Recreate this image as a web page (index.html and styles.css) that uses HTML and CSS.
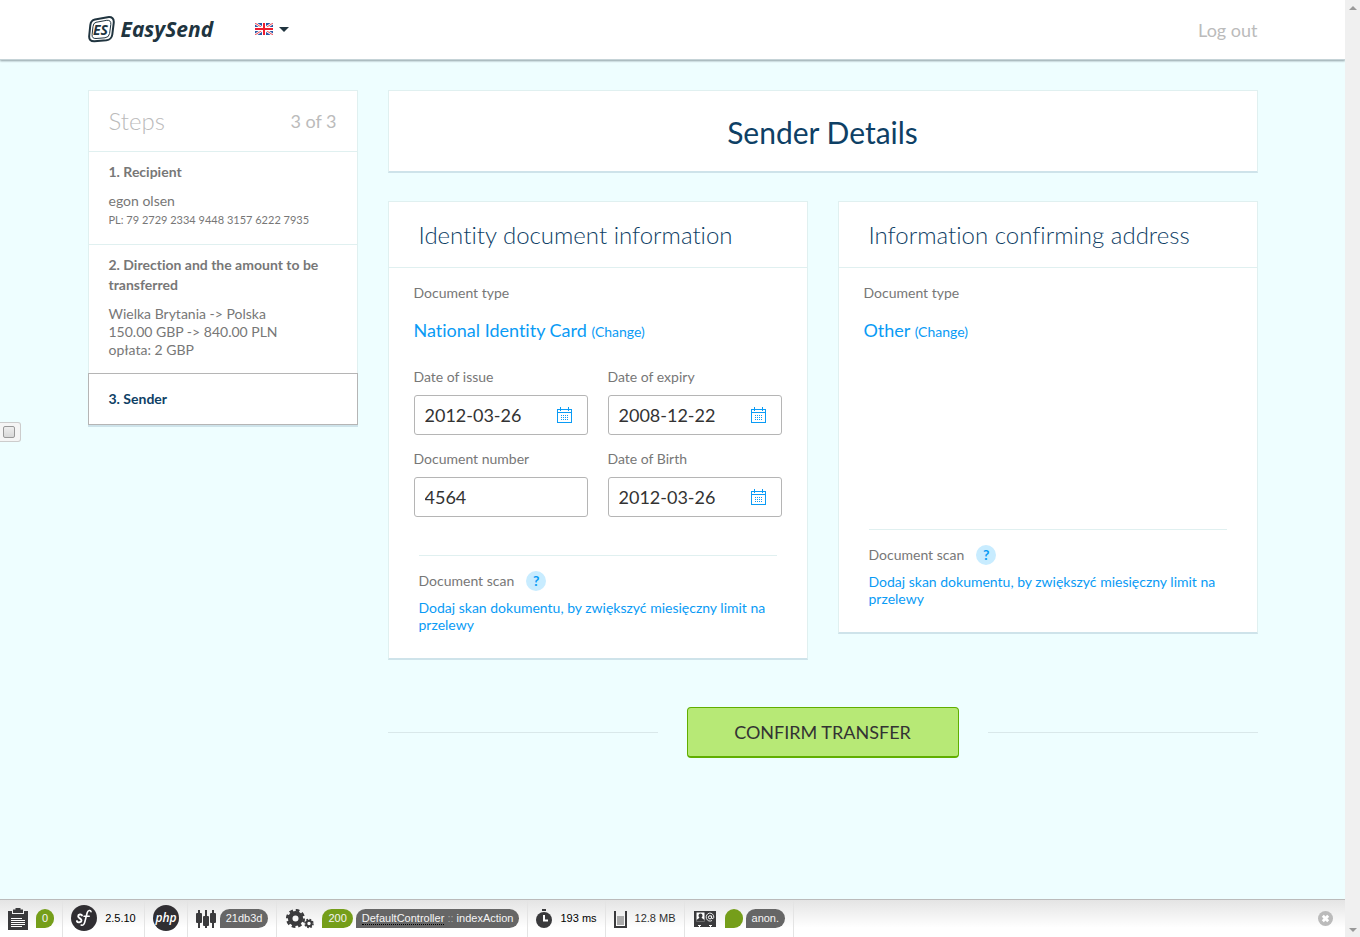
FILE: index.html
```
<!DOCTYPE html>
<html lang="en">
<head>
<meta charset="utf-8">
<title>EasySend - Sender Details</title>
<link rel="stylesheet" href="styles.css">
</head>
<body>
<svg class="sprites" aria-hidden="true">
  <symbol id="calendar" viewBox="0 0 15 16">
    <path d="M.5 2.5h14v13H.5zM.5 5.5h14M3.5 0v4M11.500 0v4" fill="none" stroke="#0a9bf5"/>
    <path d="M4 8.500h1m1 0h1m1 0h1m1 0h1M4 10.500h1m1 0h1m1 0h1m1 0h1M4 12.500h1m1 0h1m1 0h1m1 0h1" stroke="#0a9bf5"/>
  </symbol>
</svg>
<div class="page">
  <header class="topbar">
    <div class="container topbar-row">
      <a class="logo" href="#">
        <svg class="logo-mark" width="27" height="27" viewBox="0 0 27 27" aria-hidden="true">
          <path d="M7 3.600 19.500 1.200Q26.500.300 25.700 7.200L24.300 18.500Q23.600 23.600 18.300 24.300L6.500 25.300Q.700 25.500 1.200 20L2.300 9.200Q2.800 4.500 7 3.600Z" fill="none" stroke="#20343f" stroke-width="2"/>
          <path d="M8 6.300 18.800 4.300Q23.300 3.900 22.800 8.500L21.600 17.500Q21 21.400 17 21.800L8 22.500Q3.700 22.700 4.100 18.500L5 10.500Q5.300 6.900 8 6.300Z" fill="none" stroke="#20343f" stroke-width="1"/>
          <text class="logo-initials" x="5" y="19">ES</text>
        </svg>
        <span class="logo-name">EasySend</span>
      </a>
      <button class="lang" type="button" aria-label="Language: English">
        <svg width="18" height="12" viewBox="0 0 18 12" aria-hidden="true">
          <path d="M0 0h18v12H0z" fill="#2a57a5"/>
          <path d="M0 0 18 12M18 0 0 12" stroke="#fff" stroke-width="2.600"/>
          <path d="M0 0 18 12M18 0 0 12" stroke="#ef4350" stroke-width="1"/>
          <path d="M9 0v12M0 6h18" stroke="#fff" stroke-width="4"/>
          <path d="M9 0v12M0 6h18" stroke="#ee1c2e" stroke-width="2"/>
        </svg>
        <span class="caret"></span>
      </button>
      <a class="logout" href="#">Log out</a>
    </div>
  </header>

  <div class="container layout">
    <aside class="steps">
      <div class="steps-head"><h2>Steps</h2><span>3 of 3</span></div>
      <section class="step">
        <h3>1. Recipient</h3>
        <p>egon olsen</p>
        <p class="account">PL: 79 2729 2334 9448 3157 6222 7935</p>
      </section>
      <section class="step">
        <h3>2. Direction and the amount to be transferred</h3>
        <p>Wielka Brytania -&gt; Polska</p>
        <p>150.00 GBP -&gt; 840.00 PLN</p>
        <p>opłata: 2 GBP</p>
      </section>
      <section class="step current"><h3>3. Sender</h3></section>
    </aside>

    <main class="main">
      <h1 class="card title">Sender Details</h1>
      <form>
        <div class="cards">
          <section class="card">
            <h2>Identity document information</h2>
            <div class="card-body">
              <p class="label">Document type</p>
              <p class="doc-type">National Identity Card <a href="#">(Change)</a></p>
              <div class="fields">
                <div class="field"><label for="issue">Date of issue</label>
                  <div class="control"><input id="issue" type="text" value="2012-03-26"><svg class="cal"><use href="#calendar"/></svg></div></div>
                <div class="field"><label for="expiry">Date of expiry</label>
                  <div class="control"><input id="expiry" type="text" value="2008-12-22"><svg class="cal"><use href="#calendar"/></svg></div></div>
                <div class="field"><label for="number">Document number</label>
                  <div class="control"><input id="number" type="text" value="4564"></div></div>
                <div class="field"><label for="birth">Date of Birth</label>
                  <div class="control"><input id="birth" type="text" value="2012-03-26"><svg class="cal"><use href="#calendar"/></svg></div></div>
              </div>
            </div>
            <div class="scan">
              <div class="scan-head"><span>Document scan</span><button class="help" type="button">?</button></div>
              <a href="#">Dodaj skan dokumentu, by zwiększyć miesięczny limit na przelewy</a>
            </div>
          </section>
          <section class="card">
            <h2>Information confirming address</h2>
            <div class="card-body short">
              <p class="label">Document type</p>
              <p class="doc-type">Other <a href="#">(Change)</a></p>
            </div>
            <div class="scan">
              <div class="scan-head"><span>Document scan</span><button class="help" type="button">?</button></div>
              <a href="#">Dodaj skan dokumentu, by zwiększyć miesięczny limit na przelewy</a>
            </div>
          </section>
        </div>
        <div class="actions"><button class="confirm" type="submit">CONFIRM TRANSFER</button></div>
      </form>
    </main>
  </div>

  <footer class="debugbar">
    <div class="tool">
      <svg width="20" height="22" viewBox="0 0 20 22" aria-hidden="true"><path d="M0 3h4v3h12V3h4v19H0zM5 1.500h2.500V0h5v1.500H15V5H5z" fill="#3a3a3c"/><path d="M3 10.500h11M3 12.500h14M3 14.500h14M3 16.500h14M3 18.500h11" stroke="#fff"/></svg>
      <span class="badge green">0</span>
    </div>
    <div class="tool">
      <svg width="26" height="28" viewBox="0 0 26 28" aria-hidden="true"><circle cx="13" cy="13" r="13" fill="#302e32"/><path d="M11 10.400C10.400 8.900 7.200 9.200 7.200 11.200c0 2.200 3.500 2.200 3.300 4.400-.2 2.100-4 2.300-4.600.5" fill="none" stroke="#fff" stroke-width="1.900" stroke-linecap="round"/><path d="M20 6.600c-.3-1.800-3.100-1.600-3.900 1.400l-2.300 9c-.6 2.500-2 3.800-3.600 3.100M13 11.300h5.200" fill="none" stroke="#fff" stroke-width="1.600" stroke-linecap="round"/></svg>
      <span>2.5.10</span>
    </div>
    <div class="tool">
      <svg width="26" height="28" viewBox="0 0 26 28" aria-hidden="true"><circle cx="13" cy="13" r="13" fill="#302e32"/><text class="php" x="13" y="17" text-anchor="middle">php</text></svg>
    </div>
    <div class="tool">
      <svg class="near" width="20" height="18" viewBox="0 0 20 18" aria-hidden="true"><path d="M3 0v18M10 0v18M17 0v18" stroke="#3a3a3c" stroke-width="2"/><rect y="3" width="6" height="10" rx="1" fill="#3a3a3c"/><rect x="7" y="6" width="6" height="10" rx="1" fill="#3a3a3c"/><rect x="14" y="3" width="6" height="10" rx="1" fill="#3a3a3c"/></svg>
      <span class="badge">21db3d</span>
    </div>
    <div class="tool gears">
      <svg width="28" height="20" viewBox="0 0 28 20" aria-hidden="true"><g fill="none" stroke="#3a3a3c"><circle cx="9.500" cy="9.500" r="5.300" stroke-width="4.600"/><circle cx="9.500" cy="9.500" r="8.300" stroke-width="2.500" stroke-dasharray="3.700 2.819"/><circle cx="23" cy="14.500" r="2.700" stroke-width="2"/><circle cx="23" cy="14.500" r="4" stroke-width="1.600" stroke-dasharray="1.700 1.442"/></g></svg>
      <span class="badges"><span class="badge green">200</span><span class="badge"><abbr title="DefaultController">DefaultController</abbr> <i>::</i> indexAction</span></span>
    </div>
    <div class="tool">
      <svg width="16" height="19" viewBox="0 0 16 19" aria-hidden="true"><circle cx="8" cy="11" r="8" fill="#3a3a3c"/><path d="M6 0h4v2H6z" fill="#3a3a3c"/><path d="M8 6v5.500h4" fill="none" stroke="#fff" stroke-width="2"/></svg>
      <span>193 ms</span>
    </div>
    <div class="tool muted">
      <svg width="13" height="18" viewBox="0 0 13 18" aria-hidden="true"><path d="M3 6h7v9H3z" fill="#aaa"/><path d="M1 1v16h11V1" fill="none" stroke="#3a3a3c" stroke-width="2"/></svg>
      <span>12.8 MB</span>
    </div>
    <div class="tool user">
      <svg width="22" height="16" viewBox="0 0 22 16" aria-hidden="true"><path d="M0 0h22v16H0z" fill="#3a3a3c"/><path d="M2.500 1.500h8v9h-8z" fill="#fff"/><path d="M6.500 2.500a2 2 0 0 1 2 2c0 1-.5 1.700-1 2.200L10.500 9v1.500h-8V9l3-2.300c-.5-.5-1-1.200-1-2.200a2 2 0 0 1 2-2z" fill="#3a3a3c"/><path d="M4 14h3v1H6v1H5v-1H4zM15 14h3v1h-1v1h-1v-1h-1z" fill="#fff"/><circle cx="16" cy="6.300" r="1.600" fill="none" stroke="#fff"/><path d="M17.600 4.500v2.600q1.600 1.600 2.200-.800a3.800 4 0 1 0-1.800 3.200" fill="none" stroke="#fff" stroke-width=".9"/></svg>
      <span class="badges"><span class="badge green blank"></span><span class="badge">anon.</span></span>
    </div>
    <button class="close" type="button" aria-label="Close toolbar"><svg width="15" height="15" viewBox="0 0 15 15"><circle cx="7.500" cy="7.500" r="7.500" fill="#bbb"/><path d="m4.800 4.800 5.400 5.400m0-5.400-5.400 5.400" stroke="#fff" stroke-width="2.800"/></svg></button>
  </footer>
</div>
<div class="scrollbar" aria-hidden="true"><span class="arrow up"></span><span class="arrow down"></span></div>
<label class="side-tab"><input type="checkbox" aria-label="Toggle panel"></label>
</body>
</html>
```
FILE: styles.css
```
* { box-sizing: border-box; }
body {
  margin: 0;
  display: flex;
  min-height: 100vh;
  background: #eefeff;
  color: #777;
  font: 14px/18px Lato, sans-serif;
  font-variant-ligatures: none;
}
h1, h2, h3, p { margin: 0; }
a { color: #0a9bf5; text-decoration: none; }
button, input { font: inherit; }
button { cursor: pointer; }
svg { flex: none; }
.sprites { position: absolute; width: 0; height: 0; }
.page { flex: 1; min-width: 0; display: flex; flex-direction: column; }
.container { width: 100%; max-width: 1170px; margin: 0 auto; }

.topbar { background: #fff; border-bottom: 1px solid #c5d3d7; box-shadow: 0 1px 2px #8f9fa4; }
.topbar-row { display: flex; align-items: center; height: 59px; padding-bottom: 1px; }
.logo { display: flex; align-items: center; gap: 6px; color: #20343f; }
.logo-initials { font: italic 700 14px "Open Sans", sans-serif; fill: #20343f; }
.logo-name { font: italic 700 21px/28px "Open Sans", sans-serif; }
.lang { display: flex; align-items: center; gap: 6px; margin-left: 42px; padding: 0; border: 0; background: none; }
.caret { border: 5px solid transparent; border-top-color: #20343f; border-bottom: 0; }
.logout { margin-left: auto; padding-top: 2px; color: #bbb; font-size: 18px; line-height: 24px; }

.layout { flex: 1; display: flex; align-items: flex-start; gap: 30px; padding-top: 30px; }
.steps { flex: 0 0 270px; background: #fff; border: 1px solid #e0f0f0; box-shadow: 0 2px 0 #cee3ea; }
.steps-head { display: flex; align-items: center; justify-content: space-between; height: 60px; padding: 0 20px; color: #bbb; font-size: 18px; }
.steps-head h2 { font-size: 24px; font-weight: 300; line-height: 30px; }
.step { padding: 10px 20px 14px; border-top: 1px solid #e0f0f0; }
.step h3 { margin-bottom: 10px; font-size: 14px; line-height: 20px; }
.step .account { font-size: 11px; line-height: 20px; }
.step.current { margin: 0 -1px -1px; padding: 15px 20px; border: 1px solid #b5b5b5; color: #0e4065; }
.step.current h3 { margin: 0; }

.main { flex: 1; min-width: 0; }
.card { background: #fff; border: 1px solid #e0f0f0; border-bottom: 2px solid #cee3ea; }
.title { padding: 21px 20px 19px; color: #0e4065; font-size: 30px; font-weight: 400; line-height: 40px; text-align: center; }
.cards { display: grid; grid-template-columns: 1fr 1fr; align-items: start; gap: 30px; margin-top: 28px; }
.card h2 { padding: 18px 30px 17px; border-bottom: 1px solid #e0f0f0; color: #0e4065; font-size: 24px; font-weight: 300; line-height: 30px; }
.card-body { padding: 16px 25px 38px; }
.card-body.short { min-height: 261px; }
.doc-type { margin: 17px 0 25px; color: #0a9bf5; font-size: 18px; line-height: 22px; }
.doc-type a { font-size: 14px; }
.fields { display: grid; grid-template-columns: 1fr 1fr; gap: 15px 20px; }
.field label { display: block; margin-bottom: 9px; }
.control { position: relative; }
.control input { display: block; width: 100%; height: 40px; padding: 0 10px; border: 1px solid #b5b5b5; border-radius: 3px; background: #fff; color: #333; font-size: 18px; }
.cal { position: absolute; top: 12px; right: 16px; width: 15px; height: 16px; shape-rendering: crispEdges; }
.scan { margin: 0 30px; padding: 15px 0 25px; border-top: 1px solid #e0f0f0; line-height: 17px; }
.scan-head { display: flex; align-items: center; gap: 12px; margin-bottom: 8px; line-height: 18px; }
.help { width: 20px; height: 20px; padding: 0; border: 0; border-radius: 50%; background: #c8ecff; color: #0a9bf5; font-weight: 700; }
.actions { display: flex; align-items: center; gap: 29px; margin-top: 47px; }
.actions::before, .actions::after { content: ""; flex: 1; height: 1px; background: #d9e8ea; }
.confirm { width: 272px; height: 51px; border: 1px solid #60ae00; border-bottom-width: 2px; border-radius: 4px; background: #b7e976; color: #333; font-size: 18px; }

.debugbar {
  display: flex;
  height: 38px;
  border-top: 1px solid #bbb;
  background: linear-gradient(#e4e4e4, #fff 75%);
  color: #000;
  font: 11px/19px "Liberation Sans", Arial, sans-serif;
}
.tool { display: flex; align-items: center; gap: 8px; padding: 0 8px; border-right: 1px solid #e4e4e4; white-space: nowrap; }
.tool .near { margin-right: -4px; }
.tool.gears { padding-left: 9px; }
.tool.muted { color: #2f2f2f; }
.tool.user { padding-left: 9px; gap: 9px; }
.badges { display: flex; gap: 3px; }
.badge { height: 19px; padding: 0 6px; border-radius: 10px 10px 10px 0; background: #666; color: #f5f5f5; }
.badge.green { background: #759e1a; }
.badge.blank { width: 18px; }
.badge abbr { text-decoration: none; border-bottom: 1px dotted #000; }
.badge i { color: #aaa; font-style: normal; }
.php { font: italic 600 12px "Open Sans", sans-serif; fill: #fff; }
.close { margin: 0 12px 0 auto; padding: 0; border: 0; background: none; }
.close svg { display: block; }

.scrollbar { flex: 0 0 15px; display: flex; flex-direction: column; align-items: center; justify-content: space-between; padding: 6px 0 5px; background: #f0f0f0; }
.arrow { border: 4px solid transparent; }
.arrow.up { border-top: 0; border-bottom-color: #999; }
.arrow.down { border-bottom: 0; border-top-color: #999; }
.side-tab { position: fixed; left: 0; top: 45%; display: flex; align-items: center; width: 21px; height: 20px; padding-left: 3px; border: 1px solid #ccc; border-left: 0; border-radius: 0 3px 3px 0; background: #f5f5f5; }
.side-tab input { appearance: none; width: 12px; height: 12px; margin: 0; border: 1px solid #999; border-radius: 2px; background: linear-gradient(#eee, #d8d8d8); }
```
